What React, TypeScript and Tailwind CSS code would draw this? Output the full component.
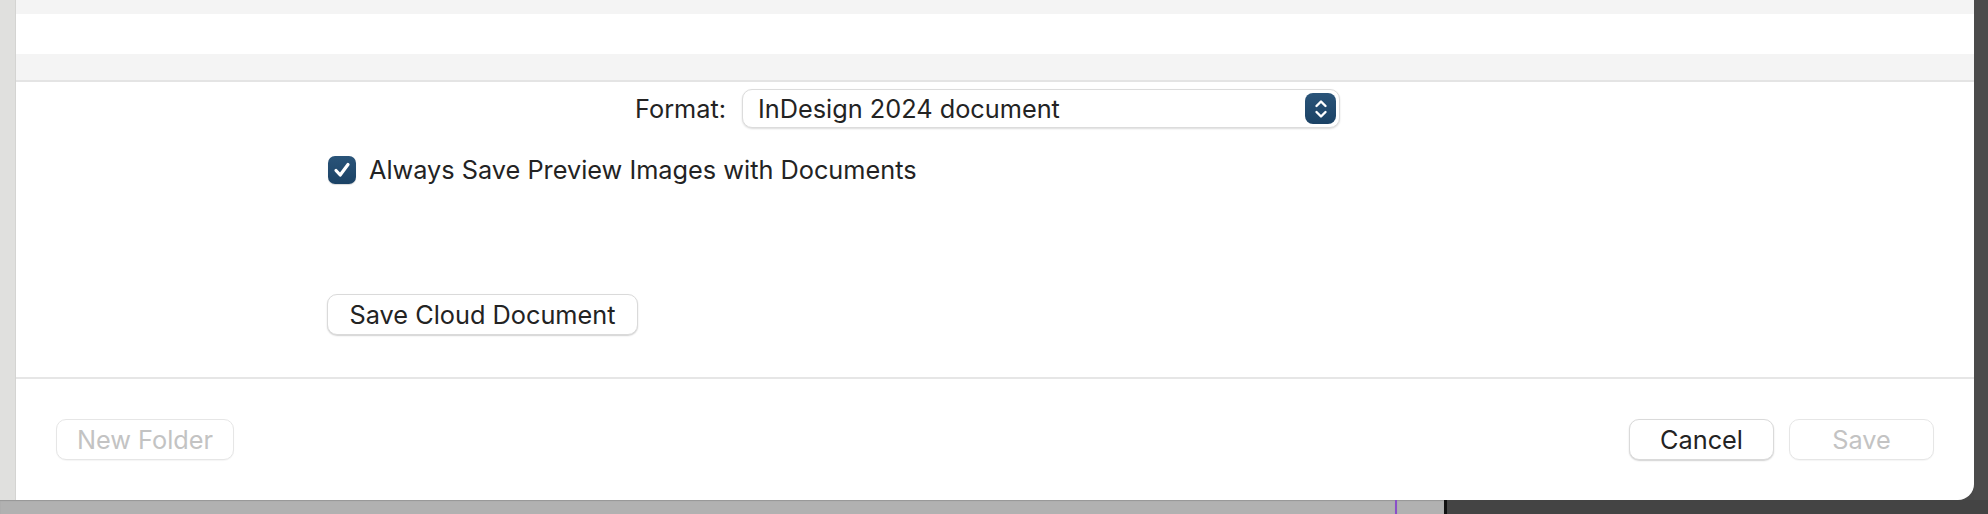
import React from "react";

const font = { fontFamily: "Inter, 'Liberation Sans', Arial, sans-serif" };

function Btn({ children, disabled, className }: { children: React.ReactNode; disabled?: boolean; className: string }) {
  return (
    <div
      className={
        "h-[41px] rounded-[10px] bg-white flex items-center justify-center text-[25.3px] leading-none border " +
        (disabled
          ? "text-[#c3c3c3] border-[#e6e6e6] shadow-[0_1px_1px_rgba(0,0,0,0.04)]"
          : "text-[#232323] border-[#dadada] shadow-[0_1px_1.5px_rgba(0,0,0,0.18)]") +
        " " +
        className
      }
    >
      {children}
    </div>
  );
}

export default function App() {
  return (
    <div className="w-[1988px] h-[514px] overflow-hidden bg-[#4a4a4a] flex flex-col" style={font}>
      <div className="flex h-[500px]">
        <div className="w-[16px] h-full bg-[#e0e0de] border-r border-[#d4d4d2]" />
        <div className="w-[1958px] h-full bg-white rounded-br-[16px] flex flex-col overflow-hidden">
          <div className="h-[14px] bg-[#f4f4f4]" />
          <div className="h-[40px] bg-white" />
          <div className="h-[26px] bg-[#f4f4f4]" />
          <div className="h-[2px] bg-[#e4e4e4]" />
          <div className="h-[295px] flex flex-col">
            <div className="flex items-center mt-[7px]">
              <div className="w-[711px] text-right text-[25.3px] text-[#232323] leading-none pr-[1px]">Format:</div>
              <div className="ml-[15px] w-[598px] h-[39px] rounded-[10px] bg-white border border-[#dcdcdc] shadow-[0_1px_2px_rgba(0,0,0,0.14)] flex items-center pl-[15px] pr-[3px]">
                <span className="flex-1 text-[25.3px] text-[#232323] leading-none">InDesign 2024 document</span>
                <div className="w-[31px] h-[31px] rounded-[8px] bg-gradient-to-b from-[#2a5479] to-[#1b4265] flex items-center justify-center">
                  <svg width="16" height="24" viewBox="0 0 16 24" fill="none" stroke="white" strokeWidth="2.4" strokeLinecap="round" strokeLinejoin="round">
                    <path d="M3.5 9 L8 4.5 L12.5 9" />
                    <path d="M3.5 15 L8 19.5 L12.5 15" />
                  </svg>
                </div>
              </div>
            </div>
            <div className="flex items-center mt-[28px] ml-[312px]">
              <div className="w-[28px] h-[28px] rounded-[7px] bg-gradient-to-b from-[#2a5479] to-[#1b4265] flex items-center justify-center shadow-[0_1px_1px_rgba(0,0,0,0.15)]">
                <svg width="20" height="20" viewBox="0 0 20 20" fill="none" stroke="white" strokeWidth="3.2" strokeLinecap="round" strokeLinejoin="round">
                  <path d="M4 10.5 L8.2 15 L16 4.5" />
                </svg>
              </div>
              <span className="ml-[13px] text-[25.3px] text-[#232323] leading-none">Always Save Preview Images with Documents</span>
            </div>
            <Btn className="mt-[110px] ml-[311px] w-[311px]">Save Cloud Document</Btn>
          </div>
          <div className="h-[2px] bg-[#e6e6e6]" />
          <div className="flex items-center mt-[40px] px-[40px]">
            <Btn disabled className="w-[178px]">New Folder</Btn>
            <div className="flex-1" />
            <Btn className="w-[145px]">Cancel</Btn>
            <Btn disabled className="w-[145px] ml-[15px]">Save</Btn>
          </div>
        </div>
        <div className="flex-1 h-full bg-[#4b4b4b]" />
      </div>
      <div className="flex h-[14px]">
        <div className="w-[1395px] bg-[#b1b1b1] shadow-[inset_0_1px_1px_rgba(0,0,0,0.15)]" />
        <div className="w-[2px] bg-[#8a4fc8]" />
        <div className="w-[47px] bg-[#b1b1b1] shadow-[inset_0_1px_1px_rgba(0,0,0,0.15)]" />
        <div className="w-[3px] bg-[#111]" />
        <div className="flex-1 bg-[#444]" />
      </div>
    </div>
  );
}
